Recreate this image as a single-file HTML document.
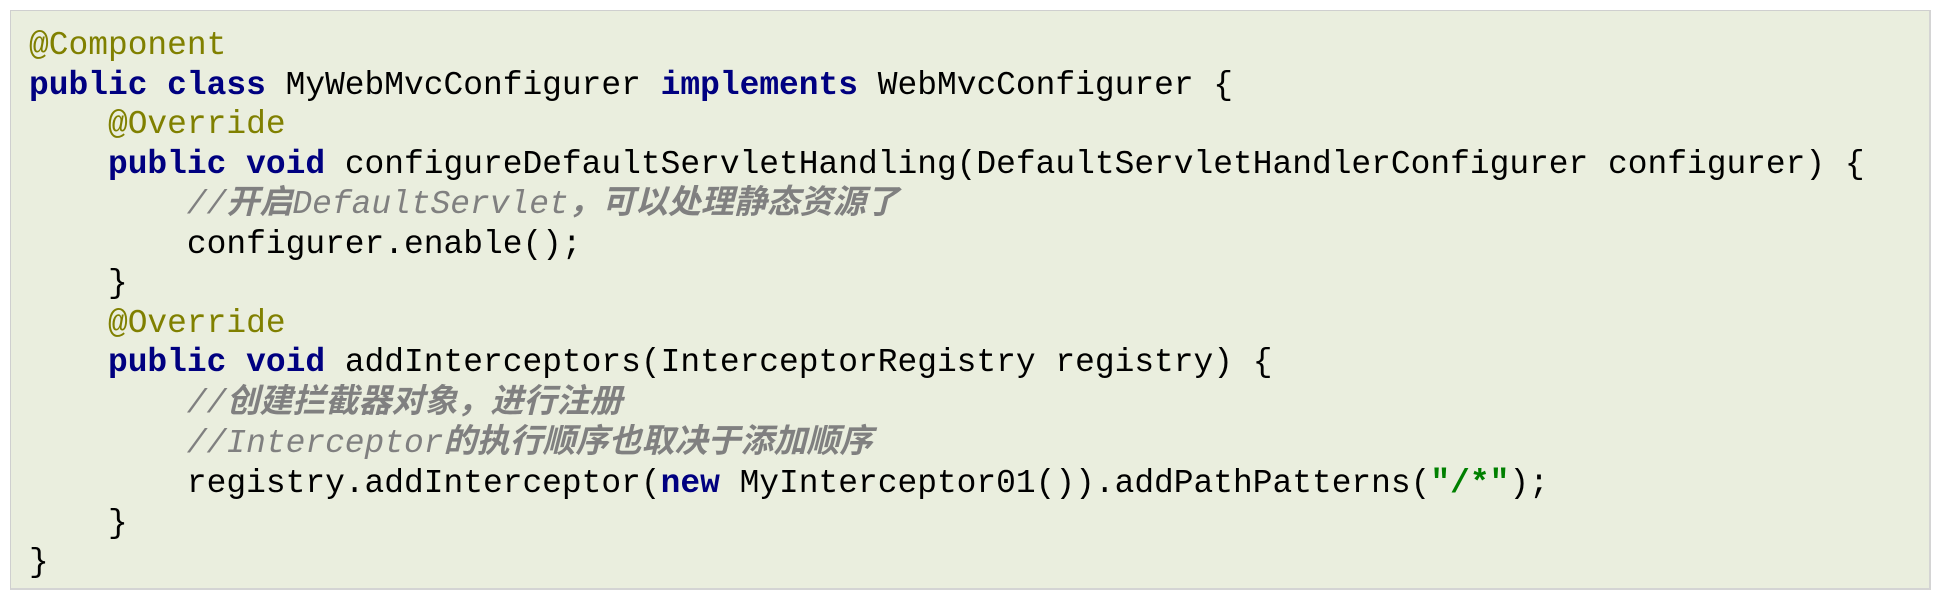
<!DOCTYPE html>
<html><head><meta charset="utf-8"><style>
html,body{margin:0;padding:0;background:#fff;width:1946px;height:610px;overflow:hidden}
.box{position:absolute;left:10px;top:10px;width:1918px;height:577px;background:#eaeede;border:1px solid #cfcfcf;border-right:2px solid #d4d4d4;border-bottom:2px solid #d4d4d4}
pre{margin:0;position:absolute;left:18px;top:15px;font-family:"Liberation Mono","Courier New",monospace;font-size:32.9px;line-height:39.55px;color:#000}
.a{color:#808000}.k{color:#000080;font-weight:bold}.c{color:#808080;font-style:italic}
.z{font-family:"Noto Sans CJK SC","WenQuanYi Zen Hei",sans-serif;font-weight:bold;font-size:33px;line-height:30px;font-style:italic}
.s{color:#008000;font-weight:bold}
</style></head><body><div class="box"><pre><span class="a">@Component</span>
<span class="k">public class</span> MyWebMvcConfigurer <span class="k">implements</span> WebMvcConfigurer {
    <span class="a">@Override</span>
    <span class="k">public void</span> configureDefaultServletHandling(DefaultServletHandlerConfigurer configurer) {
        <span class="c">//<span class="z">开启</span>DefaultServlet<span class="z">，可以处理静态资源了</span></span>
        configurer.enable();
    }
    <span class="a">@Override</span>
    <span class="k">public void</span> addInterceptors(InterceptorRegistry registry) {
        <span class="c">//<span class="z">创建拦截器对象，进行注册</span></span>
        <span class="c">//Interceptor<span class="z">的执行顺序也取决于添加顺序</span></span>
        registry.addInterceptor(<span class="k">new</span> MyInterceptor01()).addPathPatterns(<span class="s">"/*"</span>);
    }
}</pre></div></body></html>
